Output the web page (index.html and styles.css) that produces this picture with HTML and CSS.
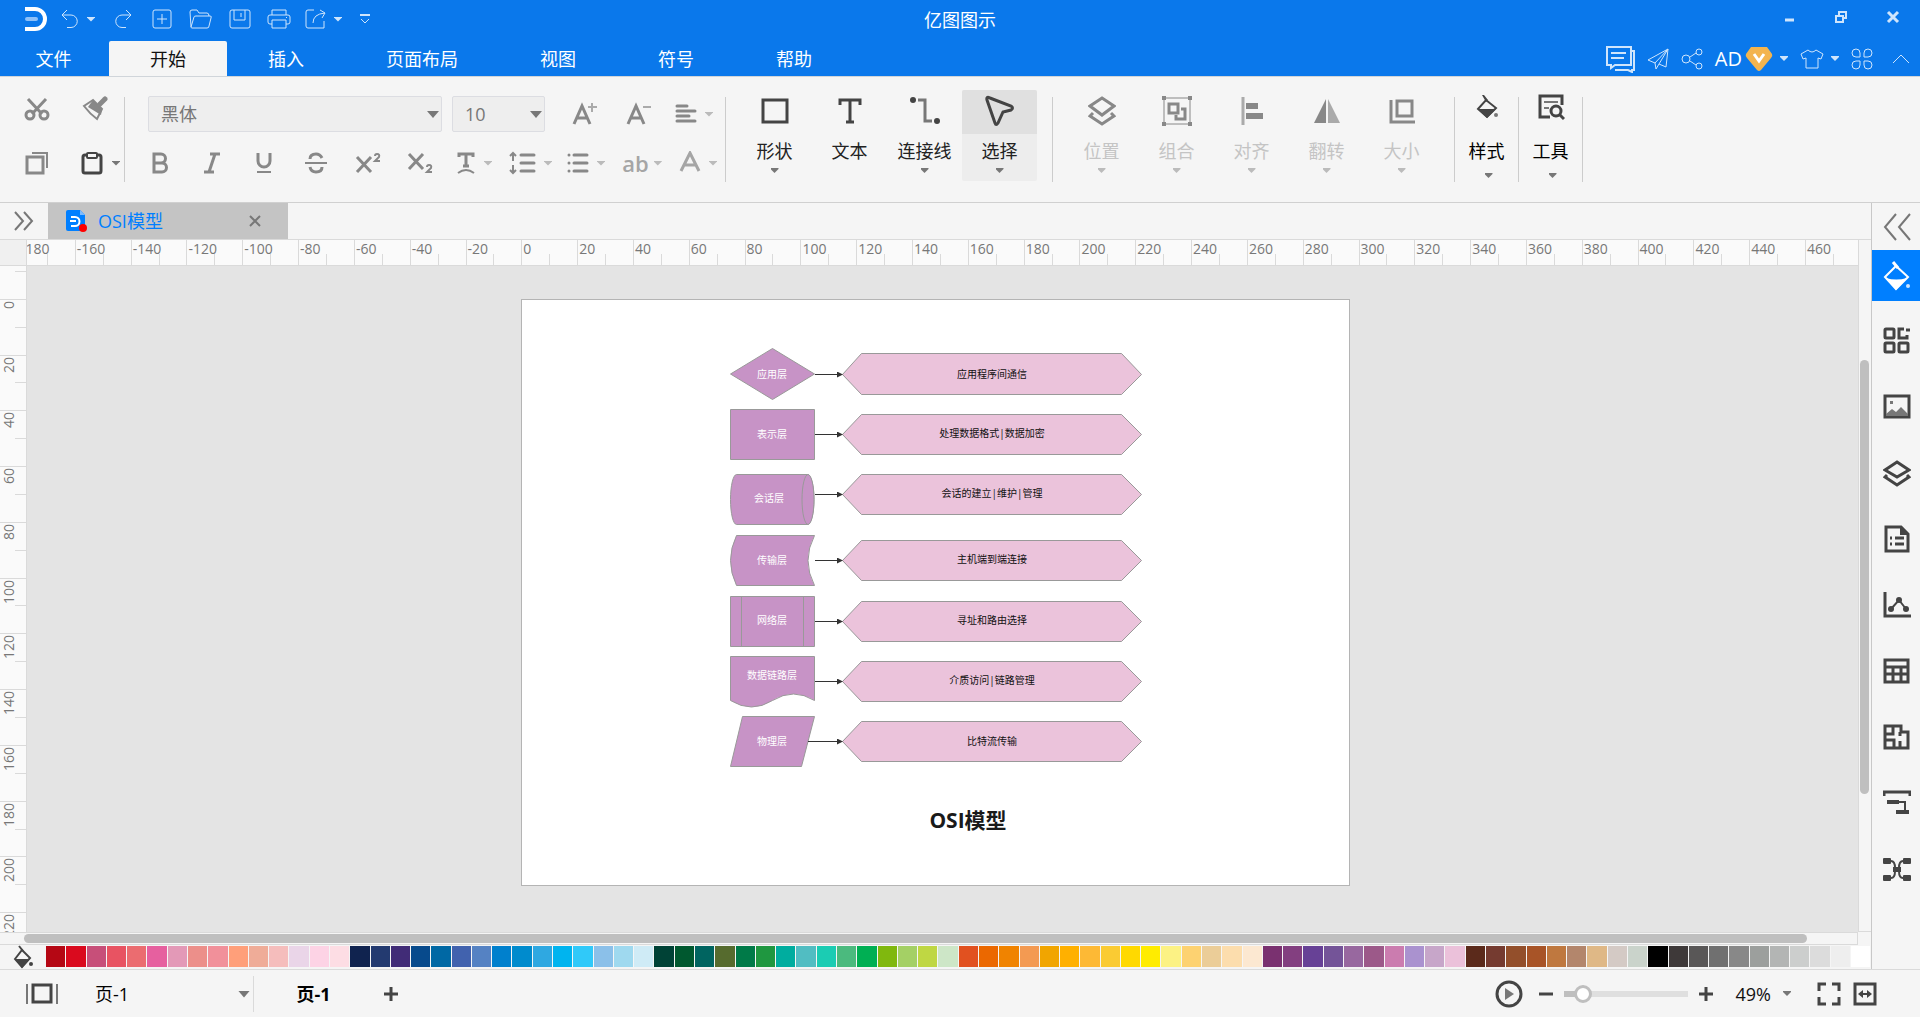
FILE: index.html
```html
<!DOCTYPE html>
<html lang="zh-CN">

<head>
	<meta charset="UTF-8">
	<meta name="viewport" content="width=device-width, initial-scale=1.0">
	<title>亿图图示</title>
	<link rel="stylesheet" href="styles.css">
</head>

<body>
	<header class="titlebar">
		<div class="quick">
			<svg class="logo" width="22" height="24" viewBox="0 0 22 24" fill="none"><path d="M0 2h10a10 10 0 0 1 0 20H0" stroke="#fff" stroke-width="4"/><path d="M2 12h9" stroke="#8fc1f8" stroke-width="4" stroke-linecap="round"/></svg>
			<button class="tool split" aria-label="撤销"><svg width="20" height="20" viewBox="0 0 20 20"><path d="M7 1L2 6l5 5M2 6h9a6 6 0 0 1 0 12.500H7"/></svg></button>
			<button class="drop" aria-label="撤销列表"><i class="caret"></i></button>
			<button class="tool redo" aria-label="重做"><svg width="20" height="20" viewBox="0 0 20 20"><path d="M13 1l5 5-5 5M18 6H9a6 6 0 0 0 0 12.500h4"/></svg></button>
			<button class="tool" aria-label="新建"><svg width="20" height="20" viewBox="0 0 20 20"><rect x="1" y="1" width="18" height="18" rx="2"/><path d="M10 5v10M5 10h10"/></svg></button>
			<button class="tool" aria-label="打开"><svg width="24" height="20" viewBox="0 0 24 20"><path d="M2 18L1 3q0-2 2-2h5l2 3h8q2 0 2 3M2 18L5 8q0-1 2-1h14q2 0 1 2l-2 8q0 2-2 2H3q-1 0-1-1"/></svg></button>
			<button class="tool" aria-label="保存"><svg width="22" height="20" viewBox="0 0 22 20"><rect x="1" y="1" width="20" height="18" rx="2"/><path d="M5 1v10h11V1M12 4v4"/></svg></button>
			<button class="tool" aria-label="打印"><svg width="24" height="20" viewBox="0 0 24 20"><path d="M5 6V1h14v5M5 15H3q-2 0-2-2V8q0-2 2-2h18q2 0 2 2v5q0 2-2 2h-2M5 11h14v8H5zM19 8.500h1"/></svg></button>
			<button class="tool export" aria-label="导出"><svg width="22" height="20" viewBox="0 0 22 20"><path d="M9 1H3Q1 1 1 3v14q0 2 2 2h16v-7M8 14q0-9 12-10M15 1l5 3-3 5"/></svg></button>
			<button class="drop" aria-label="导出选项"><i class="caret"></i></button>
			<button class="tool more" aria-label="自定义快速访问"><svg width="12" height="14" viewBox="0 0 12 14"><path d="M1 3h10" stroke-width="2"/><path d="M2 7l4 4 4-4"/></svg></button>
		</div>
		<h1>亿图图示</h1>
		<div class="window-buttons">
			<button aria-label="最小化"><svg width="14" height="14" viewBox="0 0 14 14"><path d="M3 10h9" stroke-width="3"/></svg></button>
			<button aria-label="还原"><svg width="14" height="14" viewBox="0 0 14 14"><path d="M5 5V2h7v6H9M2 6h7v6H2z" stroke-width="2"/></svg></button>
			<button aria-label="关闭"><svg width="14" height="14" viewBox="0 0 14 14"><path d="M2 2l10 10M12 2L2 12" stroke-width="3"/></svg></button>
		</div>
	</header>

	<nav class="menu">
		<a class="file" href="#">文件</a>
		<a class="active" href="#">开始</a>
		<a href="#">插入</a>
		<a class="wide" href="#">页面布局</a>
		<a href="#">视图</a>
		<a href="#">符号</a>
		<a href="#">帮助</a>
		<div class="account">
			<button aria-label="评论"><svg width="30" height="28" viewBox="0 0 30 28"><path d="M2 2h24v18H10l-4 3v-3H2zM26 6h3v19h-2v2l-4-2H10M6 8h15M6 13h13" stroke-width="2"/></svg></button>
			<button aria-label="发送"><svg width="22" height="22" viewBox="0 0 22 22"><path d="M1 12L21 1l-2 18-7-3-3 5-1-6zM8 15L21 1l-9 15"/></svg></button>
			<button aria-label="分享"><svg width="22" height="22" viewBox="0 0 22 22"><circle cx="5" cy="11" r="4"/><circle cx="18" cy="4" r="3"/><circle cx="18" cy="18" r="3"/><path d="M9 9l6-4M9 13l6 4"/></svg></button>
			<button class="user">AD<svg width="28" height="26" viewBox="0 0 28 26"><path d="M6 1h16l5 7q1 2-1 4L16 24q-2 2-4 0L2 12Q0 10 1 8z" fill="#f3b44e" stroke="none"/><path d="M9 8l5 7 5-7" stroke="#fff" stroke-width="3"/></svg><i class="caret"></i></button>
			<button class="skin" aria-label="皮肤"><svg width="24" height="20" viewBox="0 0 24 20"><path d="M8 1L1 5l2 5 3-1v10h12V9l3 1 2-5-7-4q-4 4-8 0z"/></svg><i class="caret"></i></button>
			<button aria-label="应用"><svg width="22" height="22" viewBox="0 0 22 22"><path d="M9 9H5a4 4 0 1 1 4-4zM13 9h4a4 4 0 1 0-4-4zM9 13H5a4 4 0 1 0 4 4zM13 13h4a4 4 0 1 1-4 4z"/></svg></button>
			<button aria-label="折叠功能区"><svg width="18" height="12" viewBox="0 0 18 12"><path d="M1 10l8-8 8 8"/></svg></button>
		</div>
	</nav>

	<section class="ribbon">
		<div class="clipboard">
			<div class="row">
				<button class="half" aria-label="剪切"><svg width="26" height="24" viewBox="0 0 26 24"><path d="M4 2l14 15M22 2L8 17" stroke-width="3"/><circle cx="6" cy="18" r="4" stroke-width="3"/><circle cx="20" cy="18" r="4" stroke-width="3"/></svg></button>
				<button class="half" aria-label="格式刷"><svg width="26" height="26" viewBox="0 0 26 26"><path d="M11 4l9 9-1 6-13-8z" fill="#888" stroke="none"/><path d="M11 4l-9 6q6 8 13 13l5-10zM20 7l3-4" stroke-width="2"/><path d="M18 8l5-5" stroke-width="5" stroke-linecap="round"/></svg></button>
			</div>
			<div class="row">
				<button class="half" aria-label="复制"><svg width="24" height="24" viewBox="0 0 24 24"><rect x="2" y="6" width="16" height="16" stroke-width="3"/><path d="M7 2h15v15" stroke-width="2"/></svg></button>
				<button class="half paste" aria-label="粘贴"><svg width="22" height="24" viewBox="0 0 22 24"><rect x="2" y="4" width="18" height="18" rx="2" stroke="#444" stroke-width="3"/><rect x="6" y="2" width="10" height="5" rx="1" fill="#f5f5f5" stroke="#444" stroke-width="2"/></svg><i class="caret"></i></button>
			</div>
		</div>
		<div class="divider"></div>
		<div class="font">
			<div class="row boxes">
				<label class="pick family"><select aria-label="字体"><option>黑体</option></select></label>
				<label class="pick size"><select aria-label="字号"><option>10</option></select></label>
				<button class="step" aria-label="增大字号"><svg width="26" height="24" viewBox="0 0 26 24"><path d="M2 22L10 4l8 18M5 16h10" stroke-width="3"/><path d="M20 1v9M16 5h9" stroke="#aaa" stroke-width="2"/></svg></button>
				<button class="step" aria-label="减小字号"><svg width="26" height="24" viewBox="0 0 26 24"><path d="M2 22L10 4l8 18M5 16h10" stroke-width="3"/><path d="M17 5h8" stroke="#aaa" stroke-width="2"/></svg></button>
				<button class="fmt-split" aria-label="对齐方式"><svg width="22" height="20" viewBox="0 0 22 20"><path d="M2 2h10M2 7h18M2 12h12M2 17h18" stroke-width="3" stroke-linecap="round"/></svg><i class="caret pale"></i></button>
			</div>
			<div class="row formats">
				<button class="fmt" aria-label="加粗"><svg width="20" height="22" viewBox="0 0 20 22"><path d="M4 2h7a4 4 0 0 1 0 9H4zM4 11h8a4 4 0 0 1 0 9H4z" stroke-width="3"/></svg></button>
				<button class="fmt" aria-label="斜体"><svg width="20" height="22" viewBox="0 0 20 22"><path d="M8 2h10M2 20h10M13 2L7 20" stroke-width="3"/></svg></button>
				<button class="fmt" aria-label="下划线"><svg width="20" height="22" viewBox="0 0 20 22"><path d="M4 1v8a6 6 0 0 0 12 0V1" stroke-width="3"/><path d="M3 20h14" stroke-width="2"/></svg></button>
				<button class="fmt" aria-label="删除线"><svg width="24" height="22" viewBox="0 0 24 22"><path d="M18 6q-2-4-6-4-6 0-6 5M6 15q1 5 6 5 6 0 6-5" stroke-width="3"/><path d="M1 11h22" stroke-width="2"/></svg></button>
				<button class="fmt" aria-label="上标"><svg width="26" height="22" viewBox="0 0 26 22"><path d="M2 5l14 15M16 5L2 20" stroke-width="3"/><path d="M20 4q0-2 2-2 3 0 2 3l-4 4h5" stroke-width="2"/></svg></button>
				<button class="fmt" aria-label="下标"><svg width="26" height="22" viewBox="0 0 26 22"><path d="M2 2l14 15M16 2L2 17" stroke-width="3"/><path d="M20 15q0-2 2-2 3 0 2 3l-4 4h5" stroke-width="2"/></svg></button>
				<button class="fmt-split" aria-label="文字方向"><svg width="20" height="22" viewBox="0 0 20 22"><path d="M3 5V2h14v3M10 2v12M7 14h6" stroke-width="3"/><path d="M2 21q8-6 16 0" stroke-width="2"/></svg><i class="caret pale"></i></button>
				<button class="fmt-split" aria-label="行距"><svg width="28" height="24" viewBox="0 0 28 24"><path d="M13 4h13M13 12h13M13 20h13" stroke-width="3" stroke-linecap="round"/><path d="M5 2v8M2 5l3-3 3 3M5 14v8M2 19l3 3 3-3" stroke-width="2"/></svg><i class="caret pale"></i></button>
				<button class="fmt-split" aria-label="项目符号"><svg width="22" height="22" viewBox="0 0 22 22"><path d="M7 3h13M7 11h13M7 19h13M2 3h0M2 11h0M2 19h0" stroke-width="3" stroke-linecap="round"/></svg><i class="caret pale"></i></button>
				<button class="fmt-split letters" aria-label="大小写">ab<i class="caret pale"></i></button>
				<button class="fmt-split" aria-label="字体颜色"><svg width="22" height="24" viewBox="0 0 22 24"><path d="M2 20L11 2l9 18M6 14h10" stroke="#a5a5a5" stroke-width="3"/></svg><i class="caret pale"></i></button>
			</div>
		</div>
		<div class="divider"></div>
		<div class="big-group">
			<button class="big"><span class="pic"><svg width="30" height="28" viewBox="0 0 30 28"><rect x="3" y="3" width="24" height="22" stroke-width="3"/></svg></span>形状<i class="caret"></i></button>
			<button class="big"><span class="pic"><svg width="26" height="28" viewBox="0 0 26 28"><path d="M3 8V3h20v5M13 3v22M9 25h8" stroke-width="3"/></svg></span>文本</button>
			<button class="big"><span class="pic"><svg width="32" height="30" viewBox="0 0 32 30"><path d="M9 4h7v21h7" stroke="#777" stroke-width="3"/><circle cx="4" cy="4" r="3" fill="#444" stroke="none"/><circle cx="28" cy="25" r="3" fill="#444" stroke="none"/></svg></span>连接线<i class="caret"></i></button>
			<button class="big chosen"><span class="pic"><svg width="30" height="32" viewBox="0 0 30 32"><path d="M2 5q-1-4 3-2l21 8q3 2 0 4l-8 2-5 11q-2 3-3 0z" stroke-width="3"/></svg></span>选择<i class="caret"></i></button>
		</div>
		<div class="divider"></div>
		<div class="big-group">
			<button class="big" disabled><span class="pic"><svg width="28" height="30" viewBox="0 0 28 30"><path d="M14 2l12 8-12 9L2 10z" stroke-width="3"/><path d="M5 17l-3 3 12 8 12-8-3-3" stroke-width="3"/></svg></span>位置<i class="caret"></i></button>
			<button class="big" disabled><span class="pic"><svg width="30" height="30" viewBox="0 0 30 30"><rect x="2" y="2" width="26" height="26"/><path d="M0 0h4v4H0zM26 0h4v4h-4zM0 26h4v4H0zM26 26h4v4h-4z" fill="#888" stroke="none"/><path d="M7 8h9v9H7zM19 13h4v10h-9v-4" stroke-width="3"/></svg></span>组合<i class="caret"></i></button>
			<button class="big" disabled><span class="pic"><svg width="24" height="30" viewBox="0 0 24 30"><path d="M3 1v28" stroke="#aaa" stroke-width="3"/><path d="M6 10h12M6 20h17" stroke-width="6"/></svg></span>对齐<i class="caret"></i></button>
			<button class="big" disabled><span class="pic"><svg width="28" height="26" viewBox="0 0 28 26"><path d="M13 1v24H1z" fill="#888" stroke="none"/><path d="M15 1v24h12z" fill="#aaa" stroke="none"/></svg></span>翻转<i class="caret"></i></button>
			<button class="big" disabled><span class="pic"><svg width="26" height="26" viewBox="0 0 26 26"><path d="M8 3h15v15H8z" stroke-width="3"/><path d="M2 2v22h24" stroke-width="3"/></svg></span>大小<i class="caret"></i></button>
		</div>
		<div class="divider"></div>
		<button class="big narrow"><span class="pic"><svg width="24" height="26" viewBox="0 0 24 26"><path d="M3 15l8-9 10 8-9 9z" stroke-width="2"/><path d="M3 15h18l-9 9zM7 1l2 0 4 5-2 2z" fill="#444" stroke="none"/><circle cx="21" cy="21" r="2" fill="#777" stroke="none"/></svg></span>样式<i class="caret"></i></button>
		<div class="divider"></div>
		<button class="big narrow"><span class="pic"><svg width="28" height="28" viewBox="0 0 28 28"><path d="M25 12V3H3v21h10" stroke-width="3"/><path d="M7 9h14M7 15h5" stroke="#777" stroke-width="2"/><circle cx="19" cy="18" r="5" stroke-width="3"/><path d="M22 21l5 5" stroke-width="3"/></svg></span>工具<i class="caret"></i></button>
		<div class="divider"></div>
	</section>

	<main>
		<div class="workspace">
			<div class="docs">
				<button class="unfold" aria-label="展开左侧面板"><svg width="20" height="20" viewBox="0 0 20 20"><path d="M1 1l8 9-8 9M10 1l8 9-8 9" stroke="#777" stroke-width="2"/></svg></button>
				<div class="doc">
					<svg width="22" height="22" viewBox="0 0 22 22"><path d="M2 0h12l5 5v15a1 1 0 0 1-1 1H2a2 2 0 0 1-2-2V2a2 2 0 0 1 2-2z" fill="#007fff"/><path d="M14 0l5 5h-5z" fill="#7dbcff"/><path d="M5 7h4a4 4 0 0 1 0 9H5M4 11h6" stroke="#fff" stroke-width="2"/><circle cx="17" cy="18" r="4" fill="#f00"/></svg>
					<a href="#">OSI模型</a>
					<button aria-label="关闭文档"><svg width="12" height="12" viewBox="0 0 12 12"><path d="M1 1l10 10M11 1L1 11" stroke="#777" stroke-width="2"/></svg></button>
				</div>
			</div>

			<div class="editor">
				<div class="corner"></div>
				<div class="ruler-x"><div class="scale" id="ruler-x"></div></div>
				<div class="ruler-y"><div class="scale" id="ruler-y"></div></div>
				<div class="canvas">
					<svg class="page" width="829" height="587" viewBox="1 1 827 585">
						<defs>
							<marker id="arrow" markerWidth="6" markerHeight="6" refX="5" refY="3" orient="auto" markerUnits="userSpaceOnUse"><path d="M0 0l6 3-6 3z" fill="#333"/></marker>
						</defs>
						<!-- 七层图形 -->
						<g class="layer">
							<path d="M209.500 75L251.500 49.500 293.500 75 251.500 100.500z"/>
							<path d="M209.500 110.500h84v50h-84z"/>
							<path d="M215.500 175.500h71a6.500 25 0 0 1 0 50h-71a6 25 0 0 1 0-50z"/>
							<ellipse cx="287" cy="200.500" rx="6" ry="25"/>
							<path d="M215.500 236.500h78q-13 25 0 50h-78q-12-25 0-50z"/>
							<path d="M209.500 297.500h84v50h-84zM220.500 297.500v50M282.500 297.500v50"/>
							<path d="M209.500 357.500h84v44q-21-13-42 0t-42 0z"/>
							<path d="M221.500 417.500h72l-13 50h-71z"/>
						</g>
						<g class="detail">
							<path d="M321.500 75.500l19-21h260l20 21-20 20h-260z"/>
							<path d="M321.500 135.500l19-20h260l20 20-20 20h-260z"/>
							<path d="M321.500 195.500l19-20h260l20 20-20 20h-260z"/>
							<path d="M321.500 261.500l19-20h260l20 20-20 20h-260z"/>
							<path d="M321.500 322.500l19-20h260l20 20-20 20h-260z"/>
							<path d="M321.500 382.500l19-20h260l20 20-20 20h-260z"/>
							<path d="M321.500 442.500l19-20h260l20 20-20 20h-260z"/>
						</g>
						<g class="link">
							<path d="M294 75.500h27"/>
							<path d="M294 135.500h27"/>
							<path d="M294 195.500h27"/>
							<path d="M294 261.500h27"/>
							<path d="M294 322.500h27"/>
							<path d="M294 382.500h27"/>
							<path d="M287 442.500h34"/>
						</g>
						<g class="layer-name">
							<text x="251" y="79">应用层</text>
							<text x="251" y="139">表示层</text>
							<text x="248" y="203">会话层</text>
							<text x="251" y="265">传输层</text>
							<text x="251" y="325">网络层</text>
							<text x="251" y="380">数据链路层</text>
							<text x="251" y="446">物理层</text>
						</g>
						<g class="detail-name">
							<text x="471" y="79">应用程序间通信</text>
							<text x="471" y="138">处理数据格式|数据加密</text>
							<text x="471" y="198">会话的建立|维护|管理</text>
							<text x="471" y="264">主机端到端连接</text>
							<text x="471" y="325">寻址和路由选择</text>
							<text x="471" y="385">介质访问|链路管理</text>
							<text x="471" y="446">比特流传输</text>
						</g>
						<text class="caption" x="447" y="529">OSI模型</text>
					</svg>
				</div>
				<div class="scroll-y"><div class="thumb"></div></div>
				<div class="scroll-x"><div class="thumb"></div></div>
			</div>

			<div class="palette">
				<button aria-label="填充颜色"><svg width="20" height="24" viewBox="0 0 20 24"><path d="M2 14l7-9 8 8-8 9z" stroke="#444" stroke-width="2"/><path d="M2 14h15l-8 9z" fill="#444"/><path d="M6 1l4 5" stroke="#444" stroke-width="2"/><circle cx="18" cy="19" r="2" fill="#444"/></svg></button>
				<div class="swatches" id="swatches"></div>
			</div>
		</div>

		<aside>
			<button class="fold" aria-label="收起右侧面板"><svg width="28" height="28" viewBox="0 0 28 28"><path d="M13 1L2 14l11 13M27 1L16 14l11 13" stroke="#777" stroke-width="2"/></svg></button>
			<button class="on" aria-label="填充"><svg width="28" height="30" viewBox="0 0 28 30"><path d="M2 16L13 5l12 11-12 12z" stroke="#fff" stroke-width="2"/><path d="M3 17q10 3 21 0L13 29z" fill="#fff"/><path d="M10 1l5 6" stroke="#fff" stroke-width="3"/><circle cx="25" cy="25" r="2" fill="#cfe5ff"/></svg></button>
			<button aria-label="符号库"><svg width="28" height="28" viewBox="0 0 28 28"><g stroke-width="3"><rect x="2" y="2" width="9" height="9" rx="1"/><path d="M21 2h-5v9h8V8"/><rect x="2" y="16" width="9" height="9" rx="1"/><rect x="16" y="16" width="9" height="9" rx="1"/></g><path d="M23 3h4" stroke-width="3"/></svg></button>
			<button aria-label="图片"><svg width="28" height="26" viewBox="0 0 28 26"><rect x="2" y="2" width="24" height="21" stroke-width="3"/><path d="M3 20l6-5 4 3 5-5 7 7v2H3z" fill="#777" stroke="none"/><path d="M7 7h3v3H7z" fill="#777" stroke="none"/></svg></button>
			<button aria-label="图层"><svg width="28" height="28" viewBox="0 0 28 28"><path d="M14 3l12 8-12 7L2 11z" stroke-width="3"/><path d="M4 16l-2 2 12 8 12-8-2-2" stroke-width="3"/></svg></button>
			<button aria-label="文档"><svg width="26" height="28" viewBox="0 0 26 28"><path d="M2 2h15l7 7v17H2z" stroke-width="3"/><path d="M16 2v8h8z" fill="#444" stroke="none"/><path d="M11 13h9M11 19h9M6 13h2M6 19h2" stroke-width="3"/></svg></button>
			<button aria-label="图表"><svg width="28" height="26" viewBox="0 0 28 26"><path d="M2 0v24h26" stroke-width="3"/><path d="M8 17l8-9 7 9" stroke-width="2"/><g fill="#444" stroke="none"><circle cx="8" cy="17" r="3"/><circle cx="16" cy="8" r="3"/><circle cx="23" cy="17" r="3"/></g></svg></button>
			<button aria-label="表格"><svg width="28" height="26" viewBox="0 0 28 26"><path d="M2 2h23v22H2zM2 9h23M2 16h23M10 9v15M18 9v15" stroke-width="3"/></svg></button>
			<button aria-label="平面图"><svg width="28" height="26" viewBox="0 0 28 26"><path d="M2 2h16v6h7v16H2zM10 2v8H2M2 16h9v8M17 8v4M17 17v7" stroke-width="3"/></svg></button>
			<button aria-label="时间线"><svg width="28" height="26" viewBox="0 0 28 26"><path d="M1 6V2h26v4" stroke-width="3"/><path d="M4 12h12M13 22h13" stroke-width="4"/><path d="M16 12h6v10" stroke-width="2"/></svg></button>
			<button aria-label="思维导图"><svg width="28" height="26" viewBox="0 0 28 26"><g fill="#444" stroke="none"><rect x="0" y="2" width="8" height="6" rx="1"/><rect x="20" y="2" width="8" height="6" rx="1"/><rect x="0" y="19" width="8" height="6" rx="1"/><rect x="20" y="19" width="8" height="6" rx="1"/><rect x="10" y="11" width="8" height="5"/></g><path d="M8 5q4 0 4 7v3q0 7-4 7M20 5q-4 0-4 7v3q0 7 4 7" stroke-width="2"/></svg></button>
		</aside>
	</main>

	<footer>
		<button class="pages-view" aria-label="页面视图"><svg width="34" height="22" viewBox="0 0 34 22"><rect x="8" y="2" width="18" height="17" stroke-width="3"/><path d="M2 1v20M32 1v20" stroke="#777" stroke-width="2"/></svg></button>
		<label class="pick page-pick"><select aria-label="页面"><option>页-1</option></select></label>
		<a class="page-tab" href="#">页-1</a>
		<button class="icon" aria-label="新增页面"><svg width="16" height="16" viewBox="0 0 16 16"><path d="M8 1v14M1 8h14" stroke-width="3"/></svg></button>
		<div class="zoom">
			<button class="play" aria-label="演示"><svg width="28" height="28" viewBox="0 0 28 28"><circle cx="14" cy="14" r="12" stroke-width="3"/><path d="M10 8l9 6-9 6z" fill="#777" stroke="none"/></svg></button>
			<button class="icon" aria-label="缩小"><svg width="16" height="16" viewBox="0 0 16 16"><path d="M1 8h14" stroke-width="3"/></svg></button>
			<input type="range" min="0" max="100" value="10" aria-label="缩放">
			<button class="icon" aria-label="放大"><svg width="16" height="16" viewBox="0 0 16 16"><path d="M8 1v14M1 8h14" stroke-width="3"/></svg></button>
			<button class="percent">49%<i class="caret"></i></button>
			<button aria-label="全屏"><svg width="24" height="24" viewBox="0 0 24 24"><path d="M2 9V2h7M15 2h7v7M22 15v7h-7M9 22H2v-7" stroke-width="3"/></svg></button>
			<button aria-label="适合宽度"><svg width="24" height="24" viewBox="0 0 24 24"><rect x="2" y="2" width="20" height="20" stroke-width="3"/><path d="M7 12h10" stroke-width="2"/><path d="M10 8v8l-5-4zM14 8v8l5-4z" fill="#444" stroke="none"/></svg></button>
		</div>
	</footer>

	<script src="script.js"></script>
</body>

</html>
```

FILE: styles.css
```css
* {
	box-sizing: border-box;
}

body {
	margin: 0;
	height: 100vh;
	display: flex;
	flex-direction: column;
	overflow: hidden;
	font-family: "Open Sans", "Noto Sans CJK SC", sans-serif;
	font-size: 18px;
	line-height: 24px;
	color: #111;
	background: #f5f5f5;
}

button {
	padding: 0;
	border: none;
	background: none;
	font: inherit;
	color: inherit;
	display: flex;
	align-items: center;
	justify-content: center;
	flex-shrink: 0;
}

a {
	color: inherit;
	text-decoration: none;
}

svg {
	fill: none;
	flex-shrink: 0;
}

.caret {
	width: 8px;
	height: 5px;
	background: #777;
	clip-path: polygon(0 0, 100% 0, 100% 20%, 50% 100%, 0 20%);
	flex-shrink: 0;
}

.caret.pale {
	background: #bbb;
}

/* 标题栏 */
.titlebar {
	height: 41px;
	flex-shrink: 0;
	display: grid;
	grid-template-columns: 1fr auto 1fr;
	align-items: start;
	background: #0a78eb;
	color: #fff;
}

.titlebar svg,
.menu svg {
	stroke: #cfe5fc;
}

.titlebar .caret,
.menu .caret {
	background: #cfe5fc;
}

.titlebar h1 {
	margin: 0;
	font-size: 18px;
	font-weight: 400;
	line-height: 41px;
}

.quick {
	display: flex;
	align-items: center;
	height: 38px;
	padding-left: 25px;
}

.logo {
	margin-right: 7px;
}

.tool {
	width: 39px;
	height: 38px;
}

.tool.split {
	width: 32px;
}

.tool.redo {
	margin-left: 7px;
}

.tool.export {
	width: 35px;
}

.tool.more {
	width: 44px;
}

.drop {
	width: 10px;
	height: 38px;
}

.window-buttons {
	display: flex;
	justify-content: flex-end;
	gap: 38px;
	height: 34px;
	padding-right: 20px;
}

/* 菜单 */
.menu {
	height: 35px;
	flex-shrink: 0;
	display: flex;
	background: #0a78eb;
	color: #fff;
}

.menu > a {
	width: 118px;
	line-height: 36px;
	text-align: center;
}

.menu > .file {
	width: 109px;
	padding-right: 2px;
}

.menu > .wide {
	width: 154px;
}

.menu > .active {
	border-radius: 2px 2px 0 0;
	background: #f5f5f5;
	color: #111;
}

.account {
	margin-left: auto;
	padding-right: 10px;
	display: flex;
	align-items: center;
	gap: 12px;
}

.account .user {
	gap: 3px;
	font-size: 20px;
}

.user .caret {
	margin-left: 4px;
}

.account .skin {
	gap: 7px;
}

.account button:last-child {
	margin-left: 7px;
}

/* 功能区 */
.ribbon {
	height: 127px;
	flex-shrink: 0;
	display: flex;
	border-top: 1px solid #d0d5da;
	border-bottom: 1px solid #d0d0d0;
}

.ribbon svg {
	stroke: #888;
}

.row {
	height: 36px;
	display: flex;
}

.clipboard {
	padding: 14px 0 0 8px;
	display: flex;
	flex-direction: column;
	gap: 18px;
}

.half {
	width: 58px;
}

.half.paste {
	justify-content: flex-end;
	gap: 9px;
	padding-right: 4px;
}

.divider {
	width: 1px;
	height: 85px;
	margin-top: 20px;
	background: #ccc;
}

.font {
	width: 600px;
	padding: 19px 0 0 9px;
	display: flex;
	flex-direction: column;
	gap: 13px;
}

.boxes {
	padding-left: 14px;
}

.pick {
	position: relative;
	display: block;
	flex-shrink: 0;
}

.pick select {
	width: 100%;
	height: 36px;
	padding: 0 12px;
	appearance: none;
	border: 1px solid #dcdde2;
	border-radius: 2px;
	background: #eee;
	font: inherit;
	color: #777;
}

.pick::after {
	content: "";
	position: absolute;
	right: 3px;
	top: 15px;
	width: 12px;
	height: 7px;
	background: #777;
	clip-path: polygon(0 0, 100% 0, 50% 100%);
}

.family {
	width: 294px;
	margin-right: 10px;
}

.size {
	width: 93px;
	margin-right: 13px;
}

.step {
	width: 54px;
}

.fmt {
	width: 52px;
}

.fmt-split {
	width: 56px;
	gap: 8px;
}

.fmt-split.letters {
	font-size: 22px;
	font-weight: 600;
	color: #a5a5a5;
	gap: 5px;
}

.big-group {
	display: flex;
	padding: 0 14px 0 11px;
}

.big-group + .divider {
	margin-left: 1px;
}

.big {
	width: 75px;
	height: 91px;
	margin-top: 13px;
	flex-direction: column;
	justify-content: flex-start;
	border-radius: 2px;
	overflow: hidden;
	color: #222;
}

.big svg {
	stroke: #444;
}

.big:disabled svg {
	stroke: #888;
}

.big:disabled {
	color: #c4c4c4;
}

.big:disabled .caret {
	background: #bbb;
}

.pic {
	width: 100%;
	height: 44px;
	margin-bottom: 5px;
	padding-bottom: 2px;
	display: flex;
	align-items: center;
	justify-content: center;
}

.big .caret {
	margin-top: 5px;
}

.chosen {
	background: #ededed;
}

.chosen .pic {
	background: #e0e0e0;
}

.big.narrow {
	width: 63px;
	color: #000;
}

.narrow .pic {
	height: 36px;
	margin-bottom: 13px;
}

.narrow .caret {
	margin: 10px 0 0 4px;
}

/* 工作区 */
main {
	flex: 1;
	min-height: 0;
	display: flex;
}

.workspace {
	flex: 1;
	min-width: 0;
	display: flex;
	flex-direction: column;
}

.docs {
	height: 37px;
	flex-shrink: 0;
	display: flex;
	border-bottom: 1px solid #dadada;
}

.unfold {
	width: 48px;
}

.doc {
	width: 240px;
	padding: 0 27px 0 18px;
	display: flex;
	align-items: center;
	background: #c4c4c4;
	color: #007fff;
}

.doc a {
	margin: 0 auto 0 10px;
}

.editor {
	flex: 1;
	min-height: 0;
	display: grid;
	grid-template-columns: 27px 1fr 13px;
	grid-template-rows: 26px 1fr 13px;
}

.corner {
	background: #f0f0f0;
	border-right: 1px solid #dadada;
	border-bottom: 1px solid #dadada;
}

.ruler-x,
.ruler-y {
	overflow: hidden;
	display: flex;
	background: #fafafa;
	font-size: 14px;
	line-height: 18px;
	color: #777;
}

.ruler-x {
	border-bottom: 1px solid #dadada;
}

.ruler-y {
	border-right: 1px solid #dadada;
}

.scale {
	flex: 1;
	display: flex;
}

.scale span {
	flex: 1 1 0;
	min-width: 0;
	min-height: 0;
	background: linear-gradient(#dadada, #dadada) no-repeat;
}

.ruler-x .scale {
	margin: 0 -3px 0 -8px;
}

.ruler-x span {
	padding-left: 1px;
	border-left: 1px solid #dadada;
	background-position: 50% 100%;
	background-size: 1px 11px;
}

.ruler-y .scale {
	flex-direction: column;
	margin: -23px 0 -36px;
}

.ruler-y span {
	border-top: 1px solid #dadada;
	background-position: 100% 50%;
	background-size: 11px 1px;
}

.scale b {
	display: block;
	font-weight: 400;
}

.ruler-y b {
	writing-mode: vertical-rl;
	transform: rotate(180deg);
	width: 18px;
	height: 26px;
	margin-top: 1px;
	text-align: right;
}

.canvas {
	overflow: hidden;
	display: flex;
	justify-content: center;
	padding: 33px 14px 0 0;
	background: #e4e4e4;
}

.page {
	background: #fff;
	border: 1px solid #b4b4b4;
}

.layer {
	fill: #c793c6;
	stroke: #999;
}

.detail {
	fill: #ebc3db;
	stroke: #999;
}

.link {
	stroke: #333;
}

.link path {
	marker-end: url(#arrow);
}

.layer-name,
.detail-name {
	font-size: 10px;
	text-anchor: middle;
}

.layer-name {
	fill: #fff;
}

.detail-name {
	fill: #111;
}

.caption {
	font-size: 21px;
	font-weight: 700;
	text-anchor: middle;
	fill: #1a1a1a;
}

.scroll-y {
	grid-area: 1 / 3 / 3 / 4;
	display: grid;
	grid-template-rows: 120fr 435fr 137fr;
	padding: 0 2px 0 1px;
	border-left: 1px solid #dadada;
	border-bottom: 1px solid #dadada;
}

.scroll-y .thumb {
	grid-row: 2;
}

.scroll-x {
	grid-area: 3 / 1 / 4 / 3;
	display: grid;
	grid-template-columns: 24fr 1784fr 50fr;
	padding: 1px 0;
	border: 1px solid #dadada;
	border-left: none;
}

.scroll-x .thumb {
	grid-column: 2;
}

.thumb {
	border-radius: 5px;
	background: #bfbfbf;
}

.palette {
	height: 24px;
	flex-shrink: 0;
	display: flex;
}

.palette button {
	width: 46px;
}

.swatches {
	flex: 1;
	display: flex;
	gap: 1px;
	padding: 1px 1px 2px 0;
}

.swatches i {
	flex: 1;
}

/* 右侧面板 */
aside {
	width: 49px;
	flex-shrink: 0;
	border-left: 1px solid #c8c8c8;
	overflow: hidden;
}

aside button {
	width: 100%;
	height: 66px;
	padding-left: 2px;
}

aside svg {
	stroke: #444;
}

aside .fold {
	height: 47px;
}

aside .on {
	height: 51px;
	margin-bottom: 7px;
	background: #007fff;
}

aside .on svg {
	stroke: none;
}

/* 状态栏 */
footer {
	height: 48px;
	flex-shrink: 0;
	display: flex;
	align-items: center;
	border-top: 1px solid #dadada;
}

footer svg {
	stroke: #444;
}

.pages-view {
	width: 84px;
}

.page-pick {
	width: 170px;
	border-right: 1px solid #dadada;
}

.page-pick select {
	border: none;
	padding: 0 11px;
	background: none;
	color: #000;
}

.page-tab {
	width: 119px;
	font-weight: 700;
	text-align: center;
	color: #000;
}

.icon {
	width: 36px;
}

.zoom {
	margin-left: auto;
	padding-right: 43px;
	display: flex;
	align-items: center;
}

.play {
	margin-right: 5px;
}

.zoom input {
	width: 124px;
	height: 22px;
	margin: 0;
	appearance: none;
	background: linear-gradient(90deg, #bfbfbf 16px, #dfdfdf 16px) no-repeat center / 100% 6px;
	border-radius: 3px;
}

.zoom input::-webkit-slider-thumb {
	appearance: none;
	width: 18px;
	height: 18px;
	border: 3px solid #bfbfbf;
	border-radius: 50%;
	background: #fff;
}

.percent {
	margin: 0 26px 0 12px;
	gap: 12px;
}

.percent + button {
	margin-right: 12px;
}
```

FILE: script.js
```js
// 标尺: 每格 20mm
function drawRuler(id, from, to, firstLabel) {
	const ruler = document.getElementById(id);
	for (let mm = from; mm < to; mm += 20) {
		const cell = document.createElement('span');
		if (mm >= firstLabel) {
			const label = document.createElement('b');
			label.textContent = mm;
			cell.appendChild(label);
		}
		ruler.appendChild(cell);
	}
}

drawRuler('ruler-x', -180, 480, -180);
drawRuler('ruler-y', -20, 240, 0);

const colors = [
	'#b50714', '#da0a1e', '#c74f79', '#e85362', '#eb6c70', '#e6609f', '#e399b7', '#ec8f8a', '#f1909a', '#ff9f7a', '#efac98', '#f5bdbc', '#ead5e8', '#fdd3e5', '#fddde4',
	'#10234f', '#233a70', '#412c77', '#074a8c', '#0068a4', '#4162ae', '#5582c3', '#0080cd', '#008bcd', '#2fa8e1', '#00b4ef', '#30c9f9', '#8bc0e9', '#9fd9ef', '#cfebf6',
	'#004236', '#00582f', '#006460', '#566b2e', '#007a48', '#1f9740', '#00ad9f', '#51bdc2', '#1bccb3', '#4bba7e', '#00af53', '#80b80e', '#a4d065', '#bfd743', '#cde6c7',
	'#e15120', '#eb6800', '#f08300', '#f39a52', '#f1a500', '#ffb000', '#fdb935', '#facb33', '#ffd900', '#ffec00', '#fcf284', '#fdd271', '#ebcd98', '#fcddad', '#fce8d1',
	'#7a3170', '#833f80', '#674196', '#745498', '#98689f', '#9c5989', '#cb7caf', '#aa92cf', '#c7a6c9', '#ebc1da',
	'#5b2a1b', '#753b30', '#934f2b', '#a85427', '#bf783f', '#b3866c', '#dfb886', '#d4cac5', '#cad3cb',
	'#000000', '#3e3939', '#595757', '#707070', '#888888', '#9c9f9d', '#b3b5b4', '#cccecd', '#dcdcdc', '#eeeeee', '#ffffff'
];

const swatches = document.getElementById('swatches');
colors.forEach(color => {
	const item = document.createElement('i');
	item.style.background = color;
	swatches.appendChild(item);
});
```
